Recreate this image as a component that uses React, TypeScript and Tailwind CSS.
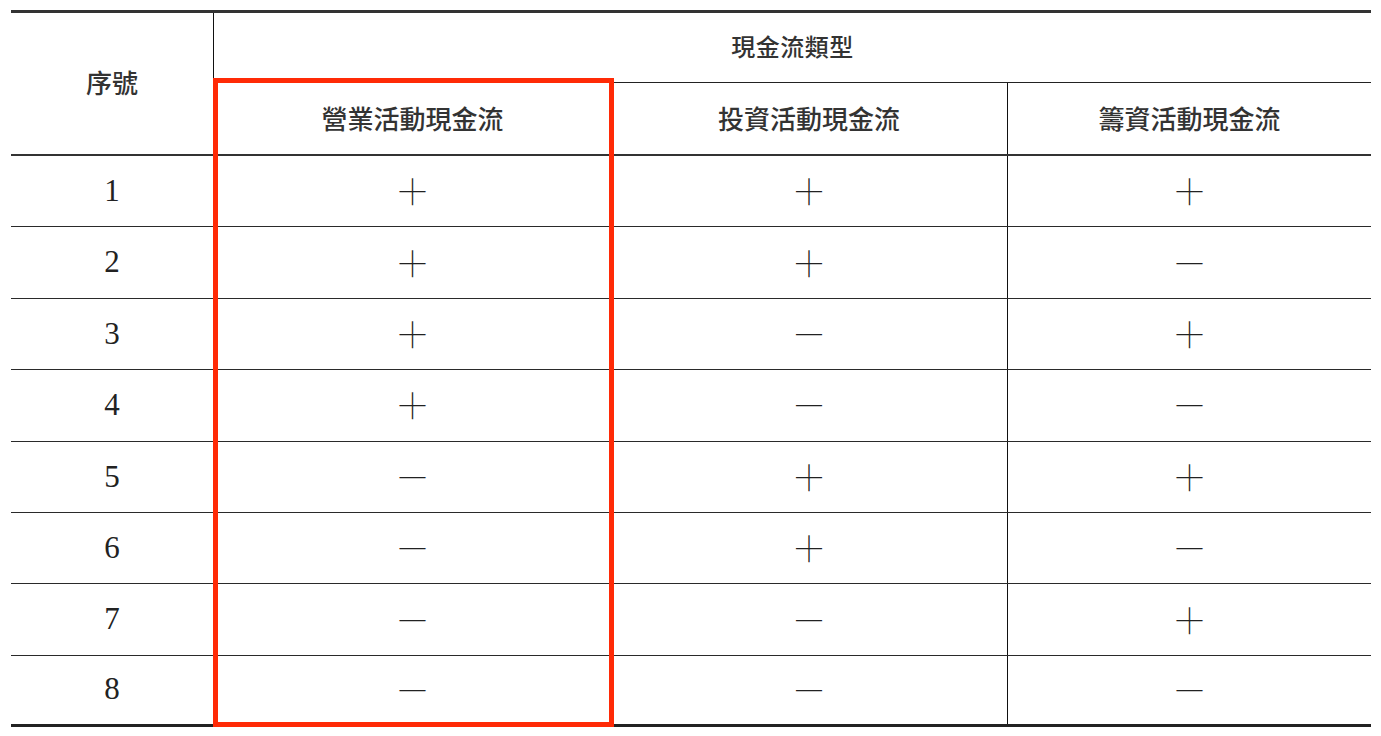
import React from "react";

const rows: [string, string, string, string][] = [
  ["1", "+", "+", "+"],
  ["2", "+", "+", "-"],
  ["3", "+", "-", "+"],
  ["4", "+", "-", "-"],
  ["5", "-", "+", "+"],
  ["6", "-", "+", "-"],
  ["7", "-", "-", "+"],
  ["8", "-", "-", "-"],
];

const sans = { fontFamily: '"Noto Sans CJK TC", "Noto Sans", sans-serif' };

function Sign({ v }: { v: string }) {
  return (
    <span
      className="text-[35px] leading-none text-[#222] font-thin pb-[3px]"
      style={sans}
    >
      {v === "+" ? "＋" : "－"}
    </span>
  );
}

export default function App() {
  return (
    <div className="w-[1381px] h-[736px] bg-white pt-[10px] pl-[11px]">
      <div className="relative w-[1360px]">
        <div className="border-t-[3px] border-[#333]">
          {/* header */}
          <div className="flex border-b-2 border-[#333]">
            <div
              className="w-[203px] h-[141px] border-r border-[#111] flex items-center justify-center pb-[5px] text-[26px] font-medium text-[#333]"
              style={sans}
            >
              序號
            </div>
            <div className="flex-1 flex flex-col">
              <div
                className="h-[70px] border-b-[1.5px] border-[#222] flex items-center justify-center pb-[4px] text-[24px] font-medium tracking-[0.5px] text-[#333]"
                style={sans}
              >
                現金流類型
              </div>
              <div className="flex-1 flex">
                {["營業活動現金流", "投資活動現金流", "籌資活動現金流"].map((t, i) => (
                  <div
                    key={t}
                    className={
                      i === 0
                        ? "w-[397px] flex items-center justify-center pb-[3px] text-[26px] font-medium text-[#333]"
                        : i === 1
                        ? "w-[397px] border-r border-[#111] flex items-center justify-center pb-[3px] text-[26px] font-medium text-[#333]"
                        : "flex-1 flex items-center justify-center pb-[3px] text-[26px] font-medium text-[#333]"
                    }
                    style={sans}
                  >
                    {t}
                  </div>
                ))}
              </div>
            </div>
          </div>
          {/* body */}
          {rows.map((r, idx) => (
            <div
              key={r[0]}
              className={
                idx === rows.length - 1
                  ? "flex h-[71px] border-b-[3px] border-[#222]"
                  : "flex h-[71.4px] border-b-[1.5px] border-[#2a2a2a]"
              }
            >
              <div
                className="w-[203px] border-r border-[#111] flex items-center justify-center text-[31px] text-[#222]"
                style={{ fontFamily: '"Liberation Serif", "Times New Roman", serif' }}
              >
                {r[0]}
              </div>
              <div className="w-[397px] flex items-center justify-center">
                <Sign v={r[1]} />
              </div>
              <div className="w-[397px] border-r border-[#111] flex items-center justify-center">
                <Sign v={r[2]} />
              </div>
              <div className="flex-1 flex items-center justify-center">
                <Sign v={r[3]} />
              </div>
            </div>
          ))}
        </div>
        {/* red annotation box */}
        <div className="absolute left-[202px] top-[68px] w-[401px] h-[649px] border-[5px] border-[#ff2a06] pointer-events-none" />
      </div>
    </div>
  );
}
